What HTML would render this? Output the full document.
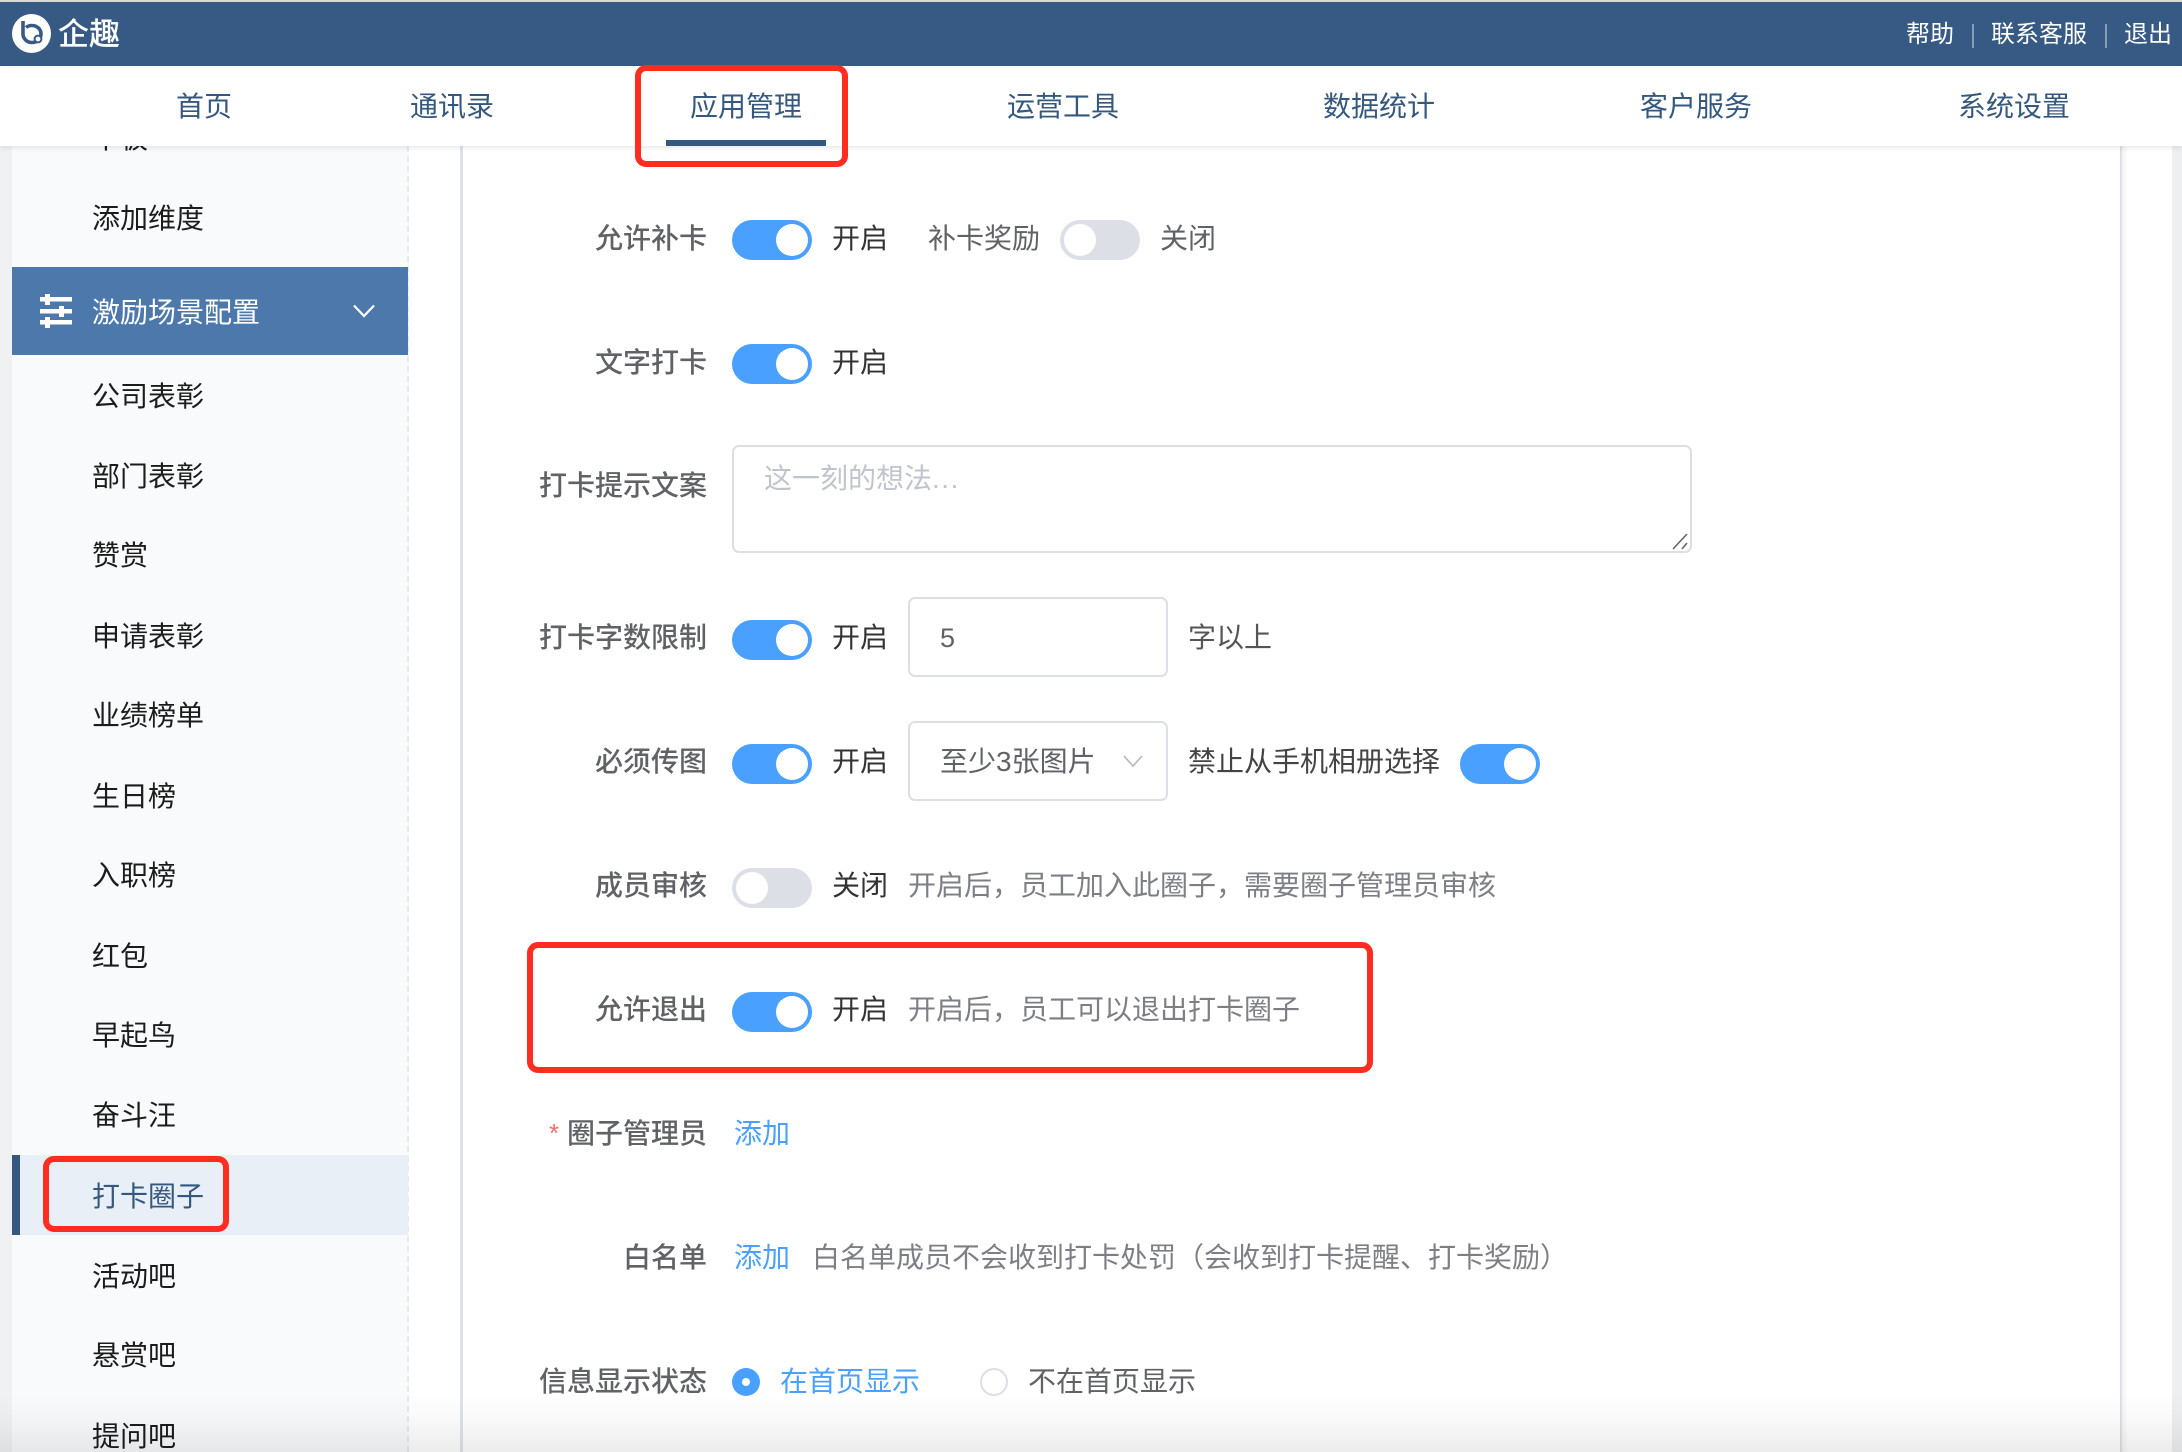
<!DOCTYPE html>
<html lang="zh-CN"><head><meta charset="utf-8"><title>企趣</title>
<style>
*{box-sizing:border-box;margin:0;padding:0}
html,body{width:2182px;height:1452px;overflow:hidden;background:#fff}
body{position:relative;font-family:"Liberation Sans","Noto Sans CJK SC",sans-serif;font-size:28px;color:#333}
.a{position:absolute}
.t{position:absolute;height:40px;line-height:40px;white-space:nowrap;margin-top:1px}
.c{transform:translateX(-50%)}
.l{position:absolute;right:1475px;height:40px;line-height:40px;white-space:nowrap;color:#606266;font-weight:500;margin-top:1px}
.g{color:#7d7f85}
.b{color:#4aa0ff}
.s{position:absolute;left:92px;height:40px;line-height:40px;white-space:nowrap;color:#1c1c1c;margin-top:2px}
.n{position:absolute;top:87px;height:40px;line-height:40px;white-space:nowrap;color:#35587f;transform:translateX(-50%)}
.sw{position:absolute;width:80px;height:40px;border-radius:20px;background:#4aa0ff}
.sw i{position:absolute;left:44px;top:4px;width:32px;height:32px;border-radius:50%;background:#fff}
.sw.off{background:#dcdfe6}
.sw.off i{left:4px}
.box{position:absolute;border:2px solid #dcdfe6;border-radius:7px;background:#fff}
.red{position:absolute;border:6px solid #ff2d20;border-radius:11px}
</style></head><body>
<div class="a" style="left:0;top:0;width:2182px;height:2px;background:#d9d9d9"></div>
<div class="a" style="left:0;top:2px;width:12px;height:1450px;background:#f0f1f3"></div>
<div class="a" style="left:2172px;top:2px;width:10px;height:1450px;background:#eeeff1"></div>

<!-- sidebar -->
<div class="a" style="left:12px;top:146px;width:397px;height:1306px;background:#f9fafc;border-right:2px dashed #e6e9ee"></div>
<div class="s" style="top:117px">中板</div>
<div class="s" style="top:197px">添加维度</div>
<div class="a" style="left:12px;top:267px;width:396px;height:88px;background:#4c78ab"></div>
<svg class="a" style="left:36px;top:290px" width="40" height="42" viewBox="0 0 40 42">
<g fill="#fff"><rect x="4" y="7" width="32" height="4.5"/><rect x="4" y="19" width="32" height="4.5"/><rect x="4" y="30" width="32" height="4.5"/>
<rect x="9" y="4" width="5" height="11"/><rect x="23" y="16" width="5" height="11"/><rect x="9" y="27" width="5" height="11"/></g></svg>
<div class="s" style="top:291px;color:#fff">激励场景配置</div>
<svg class="a" style="left:351px;top:303px" width="26" height="16" viewBox="0 0 26 16"><path d="M3 2.5 L13 13 L23 2.5" fill="none" stroke="#fff" stroke-width="2.2"/></svg>
<div class="s" style="top:375px">公司表彰</div>
<div class="s" style="top:455px">部门表彰</div>
<div class="s" style="top:534px">赞赏</div>
<div class="s" style="top:615px">申请表彰</div>
<div class="s" style="top:694px">业绩榜单</div>
<div class="s" style="top:775px">生日榜</div>
<div class="s" style="top:854px">入职榜</div>
<div class="s" style="top:935px">红包</div>
<div class="s" style="top:1014px">早起鸟</div>
<div class="s" style="top:1094px">奋斗汪</div>
<div class="a" style="left:12px;top:1155px;width:396px;height:80px;background:#e8eff7"></div>
<div class="a" style="left:12px;top:1155px;width:8px;height:80px;background:#35587f"></div>
<div class="s" style="top:1175px;color:#35587f">打卡圈子</div>
<div class="s" style="top:1255px">活动吧</div>
<div class="s" style="top:1334px">悬赏吧</div>
<div class="s" style="top:1415px">提问吧</div>
<div class="red" style="left:43px;top:1156px;width:186px;height:76px"></div>

<!-- panel -->
<div class="a" style="left:460px;top:146px;width:3px;height:1306px;background:#dfe2e8"></div>
<div class="a" style="left:2120px;top:146px;width:2px;height:1306px;background:#dde0e6"></div>
<div class="a" style="left:2122px;top:146px;width:6px;height:1306px;background:linear-gradient(90deg,#f3f3f4,#fff)"></div>

<!-- header -->
<div class="a" style="left:0;top:2px;width:2182px;height:64px;background:#375a84"></div>
<svg class="a" style="left:12px;top:14px" width="40" height="40" viewBox="0 0 40 40">
<circle cx="19.5" cy="19.5" r="19.5" fill="#fff"/>
<path d="M11 7 V20 A9 8.5 0 1 0 20 11.5 A9 9 0 0 0 14 13.5" fill="none" stroke="#375a84" stroke-width="3.6"/>
<circle cx="26" cy="25" r="3.4" fill="#fff" stroke="#375a84" stroke-width="2"/>
</svg>
<div class="t" style="left:58px;top:14px;color:#fff;font-size:31px;font-weight:500">企趣</div>
<div class="t c" style="left:1930px;top:14px;color:#fff;font-size:24px">帮助</div>
<div class="a" style="left:1972px;top:24px;width:2px;height:24px;background:rgba(255,255,255,.4)"></div>
<div class="t c" style="left:2039px;top:14px;color:#fff;font-size:24px">联系客服</div>
<div class="a" style="left:2105px;top:24px;width:2px;height:24px;background:rgba(255,255,255,.4)"></div>
<div class="t c" style="left:2148px;top:14px;color:#fff;font-size:24px">退出</div>

<!-- nav -->
<div class="a" style="left:0;top:66px;width:2182px;height:80px;background:#fff;box-shadow:0 2px 5px rgba(0,0,0,.09)"></div>
<div class="n" style="left:204px">首页</div>
<div class="n" style="left:452px">通讯录</div>
<div class="n" style="left:746px">应用管理</div>
<div class="n" style="left:1063px">运营工具</div>
<div class="n" style="left:1379px">数据统计</div>
<div class="n" style="left:1696px">客户服务</div>
<div class="n" style="left:2014px">系统设置</div>
<div class="a" style="left:666px;top:140px;width:160px;height:6px;background:#35587f"></div>
<div class="red" style="left:635px;top:65px;width:213px;height:102px"></div>

<!-- form -->
<div class="l" style="top:218px">允许补卡</div>
<div class="sw" style="left:732px;top:220px"><i></i></div>
<div class="t" style="left:832px;top:218px">开启</div>
<div class="t" style="left:928px;top:218px;color:#606266">补卡奖励</div>
<div class="sw off" style="left:1060px;top:220px"><i></i></div>
<div class="t" style="left:1160px;top:218px;color:#606266">关闭</div>

<div class="l" style="top:342px">文字打卡</div>
<div class="sw" style="left:732px;top:344px"><i></i></div>
<div class="t" style="left:832px;top:342px">开启</div>

<div class="l" style="top:465px">打卡提示文案</div>
<div class="box" style="left:732px;top:445px;width:960px;height:108px"></div>
<div class="t" style="left:764px;top:458px;color:#c0c4cc">这一刻的想法<span style="letter-spacing:1.5px">...</span></div>
<svg class="a" style="left:1670px;top:530px" width="20" height="21" viewBox="0 0 20 21"><path d="M3 19 L17 4 M12 19 L17 13" stroke="#666" stroke-width="1.6" fill="none"/></svg>

<div class="l" style="top:617px">打卡字数限制</div>
<div class="sw" style="left:732px;top:620px"><i></i></div>
<div class="t" style="left:832px;top:617px">开启</div>
<div class="box" style="left:908px;top:597px;width:260px;height:80px"></div>
<div class="t" style="left:940px;top:617px;color:#606266;font-size:27px">5</div>
<div class="t" style="left:1188px;top:617px;color:#555">字以上</div>

<div class="l" style="top:741px">必须传图</div>
<div class="sw" style="left:732px;top:744px"><i></i></div>
<div class="t" style="left:832px;top:741px">开启</div>
<div class="box" style="left:908px;top:721px;width:260px;height:80px"></div>
<div class="t" style="left:940px;top:741px;color:#606266">至少3张图片</div>
<svg class="a" style="left:1122px;top:753px" width="22" height="16" viewBox="0 0 22 16"><path d="M2 3 L11 13 L20 3" fill="none" stroke="#b4b7be" stroke-width="1.6"/></svg>
<div class="t" style="left:1188px;top:741px;color:#444">禁止从手机相册选择</div>
<div class="sw" style="left:1460px;top:744px"><i></i></div>

<div class="l" style="top:865px">成员审核</div>
<div class="sw off" style="left:732px;top:868px"><i></i></div>
<div class="t" style="left:832px;top:865px">关闭</div>
<div class="t g" style="left:908px;top:865px">开启后，员工加入此圈子，需要圈子管理员审核</div>

<div class="l" style="top:989px">允许退出</div>
<div class="sw" style="left:732px;top:992px"><i></i></div>
<div class="t" style="left:832px;top:989px">开启</div>
<div class="t g" style="left:908px;top:989px">开启后，员工可以退出打卡圈子</div>
<div class="red" style="left:527px;top:942px;width:846px;height:131px"></div>

<div class="t" style="left:549px;top:1112px;color:#f56c6c;font-size:26px">*</div>
<div class="l" style="top:1113px">圈子管理员</div>
<div class="t b" style="left:734px;top:1113px">添加</div>

<div class="l" style="top:1237px">白名单</div>
<div class="t b" style="left:734px;top:1237px">添加</div>
<div class="t g" style="left:812px;top:1237px">白名单成员不会收到打卡处罚（会收到打卡提醒、打卡奖励）</div>

<div class="l" style="top:1361px">信息显示状态</div>
<div class="a" style="left:732px;top:1368px;width:28px;height:28px;border-radius:50%;background:#4aa0ff"></div>
<div class="a" style="left:742px;top:1378px;width:8px;height:8px;border-radius:50%;background:#fff"></div>
<div class="t b" style="left:780px;top:1361px">在首页显示</div>
<div class="a" style="left:980px;top:1368px;width:28px;height:28px;border-radius:50%;border:2px solid #dcdfe6;background:#fff"></div>
<div class="t" style="left:1028px;top:1361px;color:#606266">不在首页显示</div>

<!-- bottom fade -->
<div class="a" style="left:0;top:1392px;width:2182px;height:60px;background:linear-gradient(180deg,rgba(0,0,0,0),rgba(0,0,0,.02) 40%,rgba(0,0,0,.075));pointer-events:none"></div>
</body></html>
